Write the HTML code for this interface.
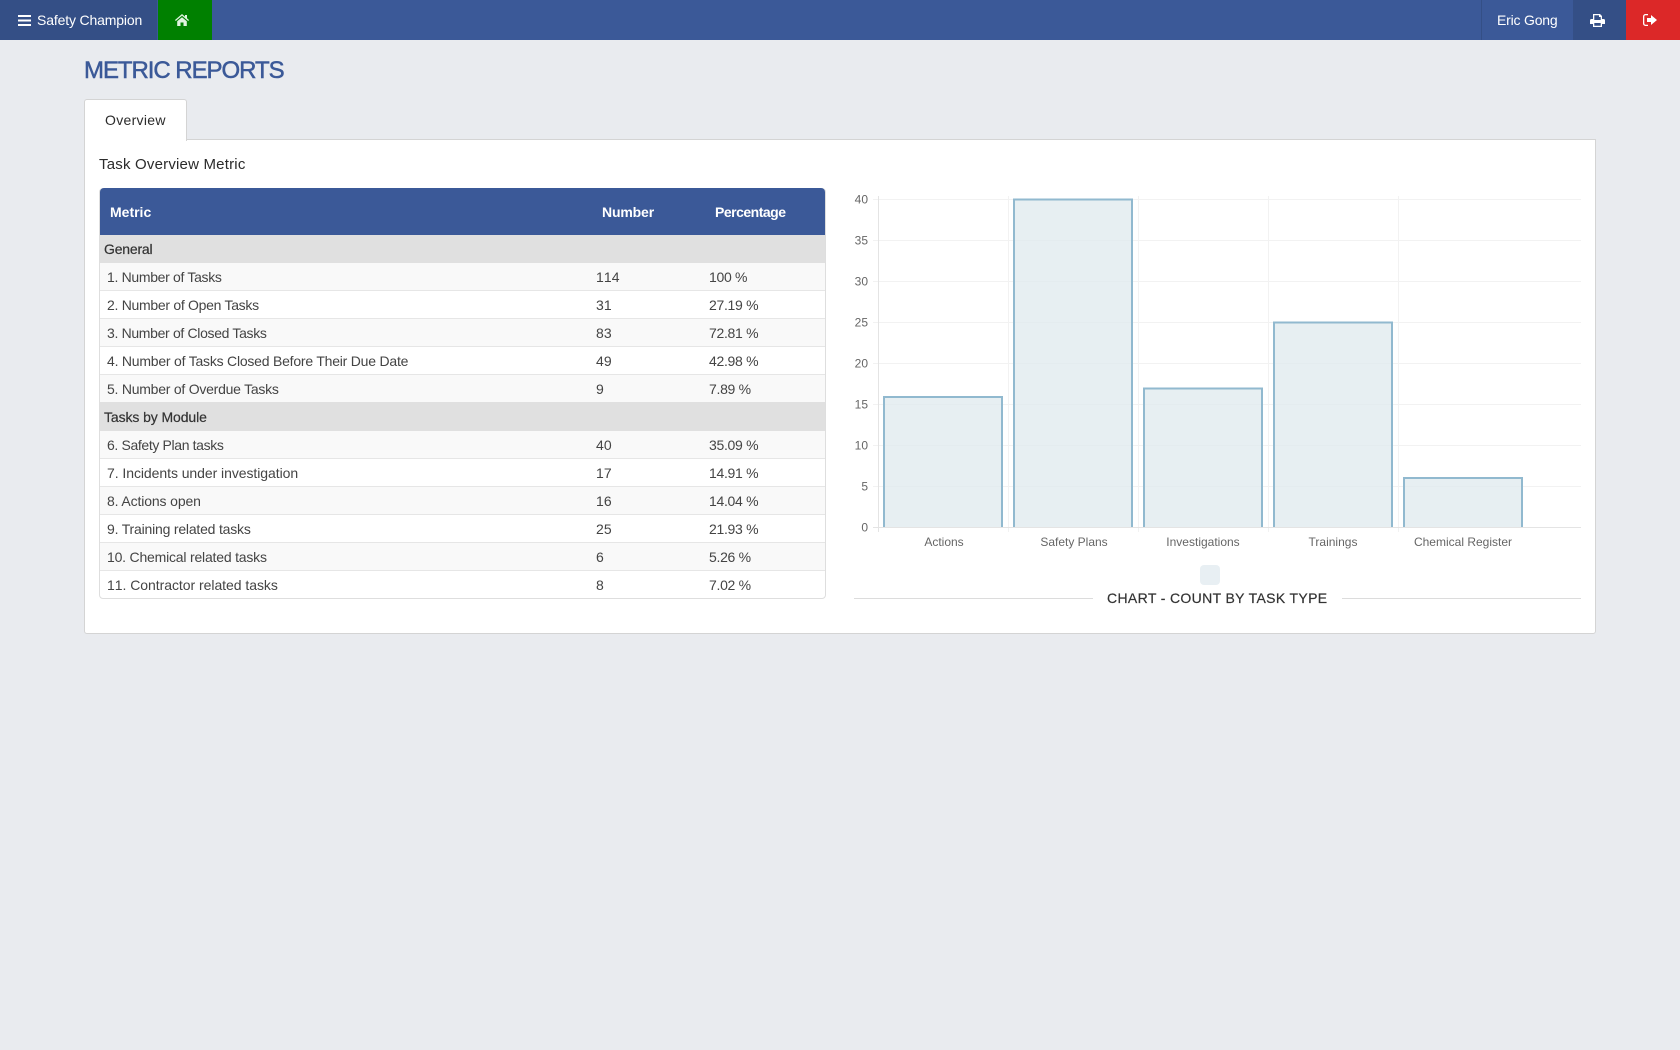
<!DOCTYPE html>
<html lang="en">
<head>
<meta charset="utf-8">
<title>Metric Reports</title>
<style>
html,body{margin:0;padding:0;width:1680px;height:1050px;overflow:hidden;background:#e9ebef;font-family:"Liberation Sans",sans-serif;color:#333;}
.a{position:absolute;white-space:nowrap;}
.nav{left:0;top:0;width:1680px;height:40px;background:#3b5998;}
.t{font-size:14px;line-height:20px;letter-spacing:-.2px;color:#444;}
.n{letter-spacing:.1px;font-kerning:none;}
.p{letter-spacing:-.3px;}
.g{-webkit-text-stroke:.2px #333;color:#333;}
.row{position:absolute;left:100px;width:725px;height:27px;border-bottom:1px solid #e6e6e6;background:#fff;}
.odd{background:#f9f9f9;}
.grp{position:absolute;left:100px;width:725px;height:28px;background:#e0e0e0;}
</style>
</head>
<body>
<div class="a nav"></div>
<div class="a" style="left:0;top:0;width:157px;height:40px;background:#344f86"></div>
<div class="a" style="left:158px;top:0;width:54px;height:40px;background:#008000"></div>
<div class="a" style="left:1481px;top:0;width:1px;height:40px;background:#344f86"></div>
<div class="a" style="left:1573px;top:0;width:53px;height:40px;background:#344f86"></div>
<div class="a" style="left:1626px;top:0;width:54px;height:40px;background:#dc2828"></div>
<svg class="a" style="left:18px;top:15px" width="13" height="11"><path d="M0 0h13v2H0zM0 4.500h13v2H0zM0 9h13v2H0z" fill="#fff"/></svg>
<div class="a" style="left:37px;top:9.500px;font-size:14px;line-height:20px;color:#fff;letter-spacing:-.15px">Safety Champion</div>
<svg class="a" style="left:175px;top:14px" width="14" height="12" viewBox="0 0 14 12"><path d="M7 0L0 6l.8 1L7 1.800 13.200 7l.8-1-2-1.700V1h-2v1.600zM2.200 7.200V12h3.300V8.500h3V12h3.300V7.200L7 3.200z" fill="#dff3df"/></svg>
<div class="a" style="left:1497px;top:9.500px;font-size:14px;line-height:20px;color:#fff;letter-spacing:-.2px">Eric Gong</div>
<svg class="a" style="left:1590px;top:14px" width="15" height="13" viewBox="0 0 15 13"><path d="M3 0h7l2 2v3h1.500A1.500 1.500 0 0 1 15 6.500V10h-3v3H3v-3H0V6.500A1.500 1.500 0 0 1 1.500 5H3zM4.300 1.300V6h6.400V3H9V1.300zM4.300 9v2.700h6.400V9z" fill="#fff" fill-rule="evenodd"/></svg>
<svg class="a" style="left:1643px;top:14px" width="14" height="12" viewBox="0 0 14 12"><path d="M5 0H2.500A2.500 2.500 0 0 0 0 2.500v7A2.500 2.500 0 0 0 2.500 12H5v-1.300H2.500a1.200 1.200 0 0 1-1.200-1.200v-7a1.200 1.200 0 0 1 1.200-1.200H5z" fill="#fff"/><path d="M8 1l6 5-6 5V8H4V4h4z" fill="#fff"/></svg>

<div class="a" style="left:84px;top:55px;font-size:24px;line-height:32px;color:#3b5998;letter-spacing:-1.05px;-webkit-text-stroke:.5px #3b5998">METRIC REPORTS</div>

<div class="a" style="left:84px;top:139px;width:1510px;height:493px;background:#fff;border:1px solid #d4d4d4;border-radius:0 0 3px 3px"></div>
<div class="a" style="left:84px;top:99px;width:101px;height:41px;background:#fff;border:1px solid #d4d4d4;border-bottom:none;border-radius:3px 3px 0 0"></div>
<div class="a" style="left:105px;top:110px;font-size:14px;line-height:20px;color:#2b2b2b;letter-spacing:.3px">Overview</div>
<div class="a" style="left:99px;top:154.500px;font-size:15px;line-height:20px;color:#2b2b2b;letter-spacing:.2px">Task Overview Metric</div>

<div class="a" style="left:99px;top:188px;width:725px;height:409px;border:1px solid #dedede;border-radius:4px"></div>
<div class="a" style="left:100px;top:188px;width:725px;height:47px;background:#3b5998;border-radius:4px 4px 0 0"></div>
<div class="a" style="left:110px;top:201.500px;font-size:14px;line-height:20px;font-weight:bold;color:#fff">Metric</div>
<div class="a" style="left:602px;top:201.500px;font-size:14px;line-height:20px;font-weight:bold;color:#fff;letter-spacing:-.15px">Number</div>
<div class="a" style="left:715px;top:201.500px;font-size:14px;line-height:20px;font-weight:bold;color:#fff;letter-spacing:-.5px">Percentage</div>

<div class="grp" style="top:235px"></div>
<div class="a t g" style="left:104px;top:238.500px">General</div>

<div class="row odd" style="top:263px"></div>
<div class="a t" style="left:107px;top:266.500px;letter-spacing:-.32px">1. Number of Tasks</div><div class="a t n" style="left:596px;top:266.500px">114</div><div class="a t p" style="left:709px;top:266.500px">100 %</div>
<div class="row" style="top:291px"></div>
<div class="a t" style="left:107px;top:294.500px;letter-spacing:-.29px">2. Number of Open Tasks</div><div class="a t n" style="left:596px;top:294.500px">31</div><div class="a t p" style="left:709px;top:294.500px">27.19 %</div>
<div class="row odd" style="top:319px"></div>
<div class="a t" style="left:107px;top:322.500px;letter-spacing:-.33px">3. Number of Closed Tasks</div><div class="a t n" style="left:596px;top:322.500px">83</div><div class="a t p" style="left:709px;top:322.500px">72.81 %</div>
<div class="row" style="top:347px"></div>
<div class="a t" style="left:107px;top:350.500px;letter-spacing:-.22px">4. Number of Tasks Closed Before Their Due Date</div><div class="a t n" style="left:596px;top:350.500px">49</div><div class="a t p" style="left:709px;top:350.500px">42.98 %</div>
<div class="row odd" style="top:375px;border-bottom:0"></div>
<div class="a t" style="left:107px;top:378.500px;letter-spacing:-.24px">5. Number of Overdue Tasks</div><div class="a t n" style="left:596px;top:378.500px">9</div><div class="a t p" style="left:709px;top:378.500px">7.89 %</div>

<div class="grp" style="top:402px;height:29px"></div>
<div class="a t g" style="left:104px;top:406.500px;letter-spacing:-.1px">Tasks by Module</div>

<div class="row odd" style="top:431px"></div>
<div class="a t" style="left:107px;top:434.500px;letter-spacing:-.36px">6. Safety Plan tasks</div><div class="a t n" style="left:596px;top:434.500px">40</div><div class="a t p" style="left:709px;top:434.500px">35.09 %</div>
<div class="row" style="top:459px"></div>
<div class="a t" style="left:107px;top:462.500px;letter-spacing:-.06px">7. Incidents under investigation</div><div class="a t n" style="left:596px;top:462.500px">17</div><div class="a t p" style="left:709px;top:462.500px">14.91 %</div>
<div class="row odd" style="top:487px"></div>
<div class="a t" style="left:107px;top:490.500px;letter-spacing:-.13px">8. Actions open</div><div class="a t n" style="left:596px;top:490.500px">16</div><div class="a t p" style="left:709px;top:490.500px">14.04 %</div>
<div class="row" style="top:515px"></div>
<div class="a t" style="left:107px;top:518.500px">9. Training related tasks</div><div class="a t n" style="left:596px;top:518.500px">25</div><div class="a t p" style="left:709px;top:518.500px">21.93 %</div>
<div class="row odd" style="top:543px"></div>
<div class="a t" style="left:107px;top:546.500px">10. Chemical related tasks</div><div class="a t n" style="left:596px;top:546.500px">6</div><div class="a t p" style="left:709px;top:546.500px">5.26 %</div>
<div class="a t" style="left:107px;top:574.500px;letter-spacing:-.04px;font-kerning:none">11. Contractor related tasks</div><div class="a t n" style="left:596px;top:574.500px">8</div><div class="a t p" style="left:709px;top:574.500px">7.02 %</div>

<svg class="a" style="left:840px;top:180px" width="750" height="430" viewBox="840 180 750 430">
<g stroke="#f2f2f2" stroke-width="1" shape-rendering="crispEdges">
<path d="M873 199.500H1581M873 240.500H1581M873 281.500H1581M873 322.500H1581M873 363.500H1581M873 404.500H1581M873 445.500H1581M873 486.500H1581"/>
<path d="M1008.500 196V532M1138.500 196V532M1268.500 196V532M1398.500 196V532"/>
</g>
<g stroke="#e4e4e4" stroke-width="1" shape-rendering="crispEdges">
<path d="M878.500 196V532M873 527.500H1581"/>
</g>
<g fill="#dfe9ee" fill-opacity=".75" stroke="#91b9cf" stroke-width="2">
<path d="M884 527V397H1002V527"/>
<path d="M1014 527V199.500H1132V527"/>
<path d="M1144 527V388.500H1262V527"/>
<path d="M1274 527V322.500H1392V527"/>
<path d="M1404 527V478H1522V527"/>
</g>
<g font-family="Liberation Sans, sans-serif" font-size="12" fill="#666" text-anchor="end">
<text x="868" y="203.500">40</text><text x="868" y="244.500">35</text><text x="868" y="285.500">30</text><text x="868" y="326.500">25</text><text x="868" y="367.500">20</text><text x="868" y="408.500">15</text><text x="868" y="449.500">10</text><text x="868" y="490.500">5</text><text x="868" y="531.500">0</text>
</g>
<g font-family="Liberation Sans, sans-serif" font-size="12" fill="#666" text-anchor="middle">
<text x="944" y="546">Actions</text><text x="1074" y="546">Safety Plans</text><text x="1203" y="546">Investigations</text><text x="1333" y="546">Trainings</text><text x="1463" y="546">Chemical Register</text>
</g>
<rect x="1200" y="565" width="20" height="20" rx="4" fill="#e8eff3"/>
<path d="M854 598.500H1093M1342 598.500H1581" stroke="#dcdcdc" stroke-width="1" shape-rendering="crispEdges"/>
</svg>
<div class="a" style="left:1107px;top:587.500px;font-size:14px;line-height:20px;color:#333;letter-spacing:.35px;-webkit-text-stroke:.2px #333">CHART - COUNT BY TASK TYPE</div>
</body>
</html>
